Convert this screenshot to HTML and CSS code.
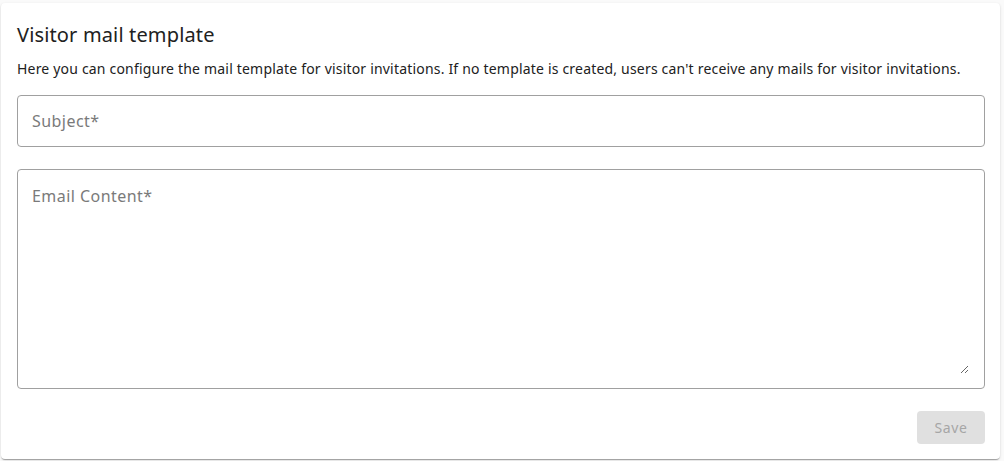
FILE: index.html
```html
<!DOCTYPE html>
<html>
<head>
<meta charset="utf-8">
<link rel="stylesheet" href="styles.css">
</head>
<body>
<div class="page">
  <section class="card">
    <h2 class="title">Visitor mail template</h2>
    <p class="desc">Here you can configure the mail template for visitor invitations. If no template is created, users can't receive any mails for visitor invitations.</p>
    <div class="field subject">
      <input class="input" type="text" placeholder="Subject*">
    </div>
    <div class="field content">
      <textarea class="textarea" placeholder="Email Content*"></textarea>
    </div>
    <div class="actions">
      <button class="save" disabled>Save</button>
    </div>
  </section>
</div>
</body>
</html>
```

FILE: styles.css
```css
* { box-sizing: border-box; }
html, body { margin: 0; padding: 0; }
body {
  background: #fafafa;
  font-family: "Noto Sans", "Open Sans", "Liberation Sans", sans-serif;
  color: #212121;
}
.page {
  padding: 3px 4px 2px 1px;
}
.card {
  background: #fff;
  border-radius: 4px;
  box-shadow: 0 2px 1px -1px rgba(0,0,0,0.2), 0 1px 1px 0 rgba(0,0,0,0.14), 0 1px 3px 0 rgba(0,0,0,0.12);
  padding: 16px 15px 15px 16px;
  height: 456px;
  display: flex;
  flex-direction: column;
}
.title {
  margin: 0;
  font-size: 20px;
  font-weight: 400;
  line-height: 32px;
  letter-spacing: 0.15px;
  color: #212121;
}
.desc {
  margin: 8px 0 16px;
  font-size: 14px;
  line-height: 20px;
  letter-spacing: 0.19px;
  color: #212121;
}
.field { display: flex; }
.input, .textarea {
  width: 100%;
  font-family: inherit;
  font-size: 16px;
  letter-spacing: 0.45px;
  color: #212121;
  background: #fff;
  outline: none;
}
.input::placeholder, .textarea::placeholder { color: #7a7a7a; opacity: 1; }
.input {
  height: 52px;
  border: 1px solid #a0a0a0;
  border-radius: 4px;
  padding: 0 14px;
}
.content {
  margin-top: 22px;
  height: 220px;
  border: 1px solid #a0a0a0;
  border-radius: 4px;
  padding: 14px 15px 14px 14px;
}
.textarea {
  height: 100%;
  border: none;
  padding: 0;
  resize: vertical;
  line-height: 24px;
}
.actions {
  display: flex;
  justify-content: flex-end;
  margin-top: 22px;
}
.save {
  width: 68px;
  height: 33px;
  border: none;
  border-radius: 4px;
  background: #e0e0e0;
  color: #a6a6a6;
  font-family: inherit;
  font-size: 14px;
  letter-spacing: 0.6px;
}
```
